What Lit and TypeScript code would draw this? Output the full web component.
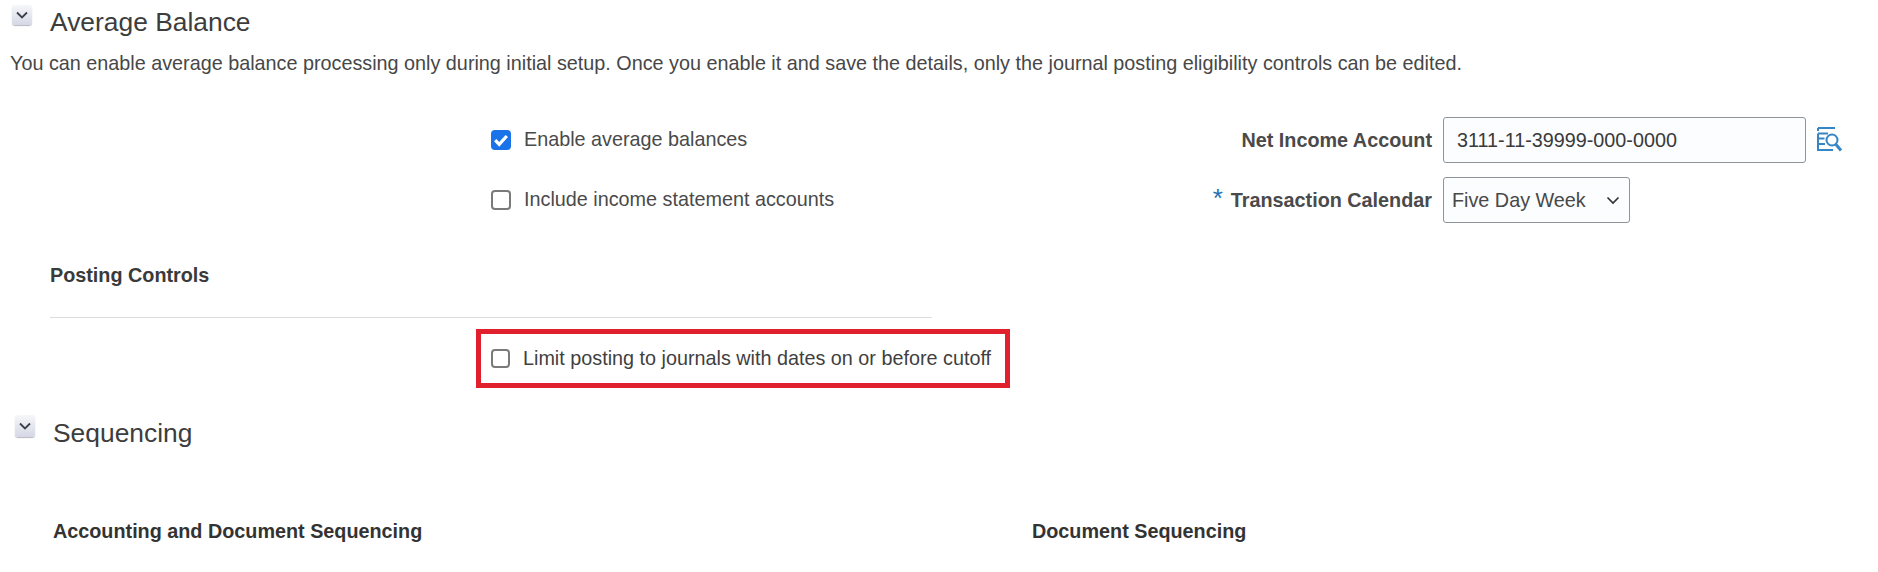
import { LitElement, html, css } from "lit";
import { customElement } from "lit/decorators.js";

const chevron = html`<svg class="tw-chev" viewBox="0 0 12 8" aria-hidden="true"><path d="M1 1.5 6 6.5 11 1.5" fill="none" stroke="#3b3f4a" stroke-width="1.8"/></svg>`;
const check = html`<svg viewBox="0 0 20 20" aria-hidden="true"><path d="M4.2 10.2 8.2 14.4 15.8 6" fill="none" stroke="#fff" stroke-width="3.2"/></svg>`;

@customElement("app-root")
export class AppRoot extends LitElement {
  static styles = css`
    :host { display: block; height: 572px; overflow: hidden; background: #fff; font-family: "Liberation Sans", Arial, sans-serif; color: #454545; }
    .head { display: flex; align-items: flex-start; }
    .twisty { width: 20px; height: 20px; box-sizing: border-box; border-radius: 3px; display: flex; align-items: center; justify-content: center; background: linear-gradient(#f6f7fa, #d5d8e4); box-shadow: 0 1px 1px #b5b8c4; }
    .tw-chev { width: 12px; height: 8px; }
    .title { font-size: 26.4px; font-weight: 400; color: #3d3d3d; margin: 0; line-height: 28px; }
    .h1 { padding: 5px 0 0 12px; height: 33px; box-sizing: border-box; }
    .h1 .title { margin: 3px 0 0 18px; }
    .desc { margin: 18px 0 0 10px; font-size: 19.8px; line-height: 24px; color: #474747; white-space: nowrap; }
    .form { display: flex; margin-top: 42px; padding-left: 491px; }
    .left { width: 709px; flex: none; padding-top: 12px; display: flex; flex-direction: column; gap: 39px; }
    .cb { display: flex; align-items: center; font-size: 19.8px; line-height: 21px; color: #4a4a4a; gap: 13px; white-space: nowrap; }
    .box { width: 20px; height: 20px; box-sizing: border-box; border: 2px solid #7a7a7a; border-radius: 4px; background: #fff; flex: none; display: block; }
    .box.on { background: #1a73e8; border: none; }
    .box svg { display: block; width: 20px; height: 20px; }
    .right { display: grid; grid-template-columns: 232px auto auto; column-gap: 11px; row-gap: 14px; align-items: center; justify-content: start; }
    .lab { font-size: 19.8px; font-weight: 700; color: #4a4a4a; text-align: right; white-space: nowrap; }
    .req { color: #1f6fb0; font-size: 26px; font-weight: 400; margin-right: 8px; line-height: 18px; }
    .field { height: 46px; box-sizing: border-box; border: 1px solid #8d949c; border-radius: 3px; background: #fbfdff; font-size: 19.8px; color: #3a3a3a; display: flex; align-items: center; white-space: nowrap; }
    .inp { width: 363px; padding-left: 13px; }
    .sel { grid-column: 2; justify-self: start; width: 187px; padding: 0 9px 0 8px; justify-content: space-between; color: #484848; }
    .sel svg { width: 14px; height: 9px; }
    .lookup { width: 28px; height: 30px; display: block; margin-left: -2px; }
    .sub { font-size: 19.8px; font-weight: 700; color: #3a3a3a; line-height: 22px; }
    .posting { margin: 41px 0 0 50px; width: 882px; padding-bottom: 31px; border-bottom: 1px solid #dcdcdc; }
    .limit { margin: 11px 0 0 476px; width: 534px; height: 59px; box-sizing: border-box; border: 5px solid #e0202c; padding-left: 10px; display: flex; align-items: center; gap: 13px; font-size: 19.8px; color: #3f3f3f; white-space: nowrap; }
    .limit .box { width: 19px; height: 19px; }
    .h2 { margin: 27px 0 0 15px; }
    .h2 .twisty { height: 22px; }
    .h2 .title { margin: 4px 0 0 18px; }
    .cols { display: flex; margin: 73px 0 0 53px; }
    .cols .sub { flex: none; color: #333; }
    .cols .sub:first-child { width: 979px; }
  `;

  render() {
    return html`
      <div class="head h1"><div class="twisty">${chevron}</div><h2 class="title">Average Balance</h2></div>
      <p class="desc">You can enable average balance processing only during initial setup. Once you enable it and save the details, only the journal posting eligibility controls can be edited.</p>
      <div class="form">
        <div class="left">
          <div class="cb"><span class="box on">${check}</span>Enable average balances</div>
          <div class="cb"><span class="box"></span>Include income statement accounts</div>
        </div>
        <div class="right">
          <div class="lab">Net Income Account</div>
          <div class="field inp">3111-11-39999-000-0000</div>
          <svg class="lookup" viewBox="0 0 28 30" fill="none" stroke="#3586c6" stroke-width="2" aria-hidden="true">
            <path d="M3 3H20M3 3V6M3 8.5H13M3 8.5V19M3 13.5H9.5M3 19H10M3 19V25H18"/>
            <circle cx="17" cy="15" r="5.5"/>
            <path d="M21 19.5 26 25.5" stroke-width="3"/>
          </svg>
          <div class="lab"><span class="req">*</span>Transaction Calendar</div>
          <div class="field sel">Five Day Week<svg viewBox="0 0 14 9" aria-hidden="true"><path d="M1.5 1.5 7 7 12.5 1.5" fill="none" stroke="#333" stroke-width="1.7"/></svg></div>
        </div>
      </div>
      <div class="sub posting">Posting Controls</div>
      <div class="limit"><span class="box"></span>Limit posting to journals with dates on or before cutoff</div>
      <div class="head h2"><div class="twisty">${chevron}</div><h2 class="title">Sequencing</h2></div>
      <div class="cols"><div class="sub">Accounting and Document Sequencing</div><div class="sub">Document Sequencing</div></div>
    `;
  }
}
